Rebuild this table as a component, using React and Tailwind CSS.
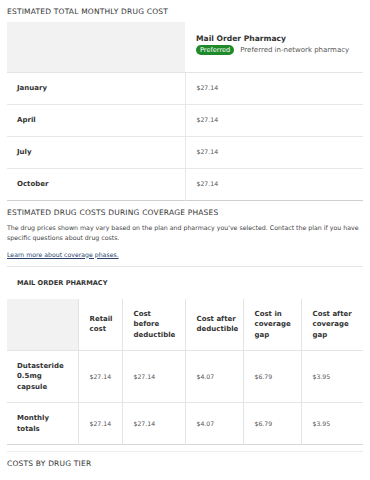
import React from 'react';

const months = ['January', 'April', 'July', 'October'];

const phaseCols = [
  { label: 'Retail cost', w: 'w-[44px]', pr: 'pr-[8px]' },
  { label: 'Cost before deductible', w: 'w-[63px]', pr: 'pr-[12px]' },
  { label: 'Cost after deductible', w: 'w-[58px]', pr: 'pr-[4px]' },
  { label: 'Cost in coverage gap', w: 'w-[58px]', pr: 'pr-[8px]' },
  { label: 'Cost after coverage gap', w: 'w-[62px]', pr: 'pr-[8px]' },
];

const phaseRows = [
  { name: 'Dutasteride 0.5mg capsule', values: ['$27.14', '$27.14', '$4.07', '$6.79', '$3.95'] },
  { name: 'Monthly totals', values: ['$27.14', '$27.14', '$4.07', '$6.79', '$3.95'] },
];

export default function App() {
  return (
    <div className="w-[370px] bg-white px-[7px] pt-[7px] text-[#333] font-['DejaVu_Sans',sans-serif]">
      {/* monthly cost */}
      <h2 className="text-[7.5px] leading-[9px] tracking-[0.2px] text-[#333]">ESTIMATED TOTAL MONTHLY DRUG COST</h2>
      <table className="mt-[6px] w-full border-collapse table-fixed">
        <thead>
          <tr className="h-[50px] border-b border-[#e4e4e4]">
            <th className="w-[178px] bg-[#f2f2f2]"></th>
            <th className="pl-[11px] pb-[4px] text-left align-middle font-normal">
              <div className="text-[7.6px] font-bold leading-[9px] text-[#333]">Mail Order Pharmacy</div>
              <div className="mt-[2px] flex items-center gap-[6px]">
                <span className="rounded-full bg-[#1f8a2a] px-[4px] text-[6.6px] leading-[10px] text-white">Preferred</span>
                <span className="text-[7px] text-[#555]">Preferred in-network pharmacy</span>
              </div>
            </th>
          </tr>
        </thead>
        <tbody>
          {months.map((m, i) => (
            <tr key={m} className={`h-[32px] border-b ${i === months.length - 1 ? 'border-[#cfcfcf]' : 'border-[#e8e8e8]'}`}>
              <td className="border-r border-[#e8e8e8] pl-[10px] text-[7px] font-bold text-[#333]">{m}</td>
              <td className="pl-[11px] text-[6.2px] text-[#555]">$27.14</td>
            </tr>
          ))}
        </tbody>
      </table>

      {/* coverage phases */}
      <h2 className="mt-[7px] text-[7.5px] leading-[9px] tracking-[0.2px] text-[#333]">ESTIMATED DRUG COSTS DURING COVERAGE PHASES</h2>
      <p className="mt-[6px] text-[6.25px] leading-[10px] text-[#444]">
        The drug prices shown may vary based on the plan and pharmacy you've selected. Contact the plan if you have specific questions about drug costs.
      </p>
      <a className="mt-[7px] block text-[6.2px] leading-[9px] text-[#2a3f6b] underline">Learn more about coverage phases.</a>
      <div className="mt-[7px] border-t border-[#e4e4e4]"></div>

      <h3 className="mt-[12px] pl-[10px] text-[6.6px] font-bold leading-[9px] text-[#333]">MAIL ORDER PHARMACY</h3>
      <table className="mt-[11px] w-full border-collapse table-fixed">
        <thead>
          <tr className="h-[52px] border-b border-[#e4e4e4]">
            <th className="w-[71px] bg-[#f2f2f2] border-r border-[#e4e4e4]"></th>
            {phaseCols.map((c, i) => (
              <th
                key={c.label}
                className={`${c.w} ${c.pr} ${i < phaseCols.length - 1 ? 'border-r border-[#e4e4e4]' : ''} pl-[11px] text-left align-middle text-[7px] font-bold leading-[10.5px] text-[#333]`}
              >
                {c.label}
              </th>
            ))}
          </tr>
        </thead>
        <tbody>
          {phaseRows.map((r, ri) => (
            <tr key={r.name} className={`${ri === 0 ? 'h-[52px] border-[#e4e4e4]' : 'h-[42px] border-[#d6d6d6]'} border-b`}>
              <td className="border-r border-[#e4e4e4] pl-[10px] pr-[10px] text-[7px] font-bold leading-[10.5px] text-[#333]">{r.name}</td>
              {r.values.map((v, i) => (
                <td
                  key={i}
                  className={`${i < r.values.length - 1 ? 'border-r border-[#e4e4e4]' : ''} pl-[11px] text-[6.2px] text-[#555]`}
                >
                  {v}
                </td>
              ))}
            </tr>
          ))}
        </tbody>
      </table>
      <div className="mt-[6px] border-t border-[#ececec]"></div>
      <h2 className="mt-[7px] pb-[12px] text-[7.5px] leading-[9px] tracking-[0.2px] text-[#333]">COSTS BY DRUG TIER</h2>
    </div>
  );
}
